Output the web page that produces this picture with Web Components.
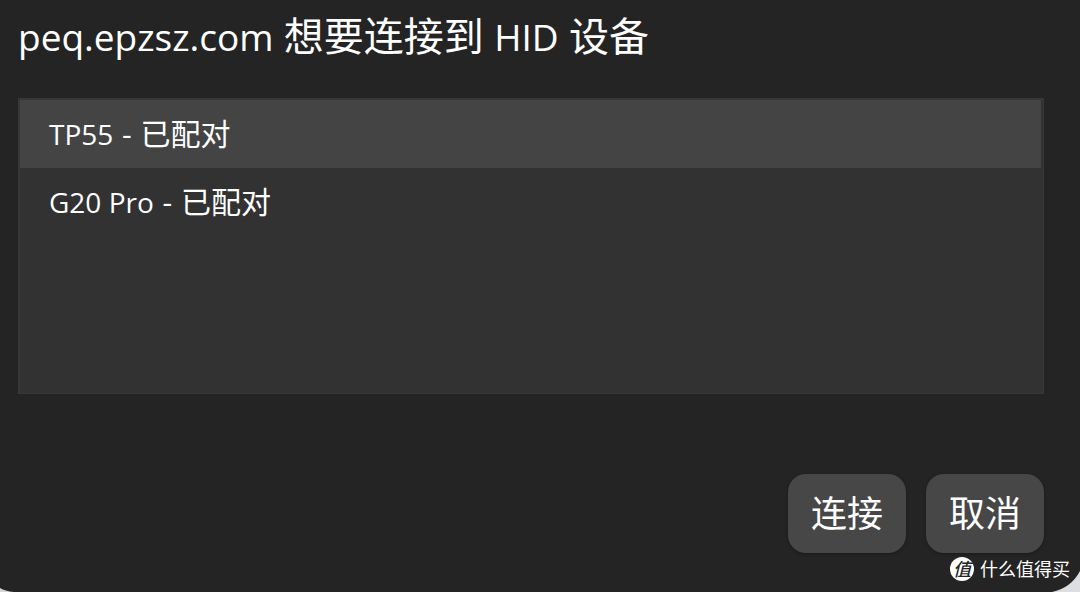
<!DOCTYPE html>
<html lang="zh-CN">
<head>
<meta charset="utf-8">
<meta name="viewport" content="width=device-width, initial-scale=1">
<title>HID 设备</title>
<style>
  html, body {
    margin: 0;
    min-height: 100%;
  }
  body {
    background: #242424;
    color: #fff;
    font-family: "Open Sans", "Noto Sans CJK SC", sans-serif;
  }
</style>
</head>
<body>
<device-chooser>
  <chooser-title slot="title" origin="peq.epzsz.com" device="HID"></chooser-title>
  <device-list slot="list">
    <device-item selected name="TP55"></device-item>
    <device-item name="G20 Pro"></device-item>
  </device-list>
  <chooser-button slot="actions">连接</chooser-button>
  <chooser-button slot="actions">取消</chooser-button>
  <site-mark slot="mark">什么值得买</site-mark>
</device-chooser>

<script>
class DeviceChooser extends HTMLElement {
  connectedCallback() {
    this.attachShadow({ mode: 'open' });
    this.shadowRoot.innerHTML = `
      <style>
        :host {
          display: block;
          position: relative;
          box-sizing: border-box;
          min-height: 100vh;
          padding: 8px 36px 36px 18px;
          background: #242424;
          overflow: hidden;
        }
        .actions {
          display: flex;
          justify-content: flex-end;
          gap: 20px;
          margin-top: 80px;
        }
        .mark {
          position: absolute;
          right: 10px;
          bottom: 10px;
          z-index: 1;
        }
        .corner {
          position: absolute;
          bottom: 0;
          display: block;
        }
        .left { left: 0; }
        .right { right: 0; }
      </style>
      <slot name="title"></slot>
      <slot name="list"></slot>
      <div class="actions"><slot name="actions"></slot></div>
      <svg class="corner left" width="16" height="5" viewBox="0 0 16 5"><path d="M0 1Q5 4 14 5H0Z" fill="#d6d6d6"/></svg>
      <svg class="corner right" width="28" height="21" viewBox="0 0 28 21"><path d="M28 0Q19 17 0 21H28Z" fill="#dddee2"/></svg>
      <div class="mark"><slot name="mark"></slot></div>
    `;
  }
}

class ChooserTitle extends HTMLElement {
  connectedCallback() {
    this.attachShadow({ mode: 'open' });
    this.shadowRoot.innerHTML = `
      <style>
        :host { display: block; }
        h1 {
          margin: 0 0 33px;
          font-size: 40px;
          font-weight: 400;
          line-height: 56px;
        }
        span { font-size: 37px; }
      </style>
      <h1><span>${this.getAttribute('origin')}</span> 想要连接到 <span>${this.getAttribute('device')}</span> 设备</h1>
    `;
  }
}

class DeviceList extends HTMLElement {
  connectedCallback() {
    this.attachShadow({ mode: 'open' });
    this.shadowRoot.innerHTML = `
      <style>
        :host { display: block; }
        div {
          box-sizing: border-box;
          min-height: 296px;
          padding-right: 2px;
          background: #323232;
          border: 2px solid #373737;
          border-width: 2px 1px 1px 2px;
        }
      </style>
      <div role="listbox" aria-label="HID 设备"><slot></slot></div>
    `;
  }
}

class DeviceItem extends HTMLElement {
  connectedCallback() {
    this.setAttribute('role', 'option');
    this.setAttribute('aria-selected', this.hasAttribute('selected'));
    this.tabIndex = 0;
    this.attachShadow({ mode: 'open' });
    this.shadowRoot.innerHTML = `
      <style>
        :host {
          display: block;
          padding: 0 29px;
          font-size: 30px;
          line-height: 68px;
          cursor: default;
          outline: none;
        }
        :host([selected]) { background: #444; }
        .name { font-size: 28px; }
        .dash { padding: 0 1px; }
      </style>
      <span class="name">${this.getAttribute('name')}</span><span class="dash"> - </span>已配对
    `;
  }
}

class ChooserButton extends HTMLElement {
  connectedCallback() {
    this.attachShadow({ mode: 'open' });
    this.shadowRoot.innerHTML = `
      <style>
        :host { display: block; }
        button {
          display: block;
          height: 79px;
          padding: 0 23px 5px;
          color: inherit;
          background: #474747;
          border: none;
          border-radius: 18px;
          box-shadow: 0 1px 3px #1a1a1a;
          font: inherit;
          font-size: 36px;
          cursor: pointer;
        }
      </style>
      <button type="button"><slot></slot></button>
    `;
  }
}

class SiteMark extends HTMLElement {
  connectedCallback() {
    this.attachShadow({ mode: 'open' });
    this.shadowRoot.innerHTML = `
      <style>
        :host {
          display: flex;
          align-items: center;
          gap: 6px;
          font-size: 18px;
          line-height: 26px;
        }
        .badge {
          width: 24px;
          height: 24px;
          border-radius: 50%;
          background: #fff;
          color: #242424;
          font-style: italic;
          font-weight: 500;
          line-height: 24px;
          text-align: center;
        }
      </style>
      <span class="badge">值</span>
      <span><slot></slot></span>
    `;
  }
}

customElements.define('device-chooser', DeviceChooser);
customElements.define('chooser-title', ChooserTitle);
customElements.define('device-list', DeviceList);
customElements.define('device-item', DeviceItem);
customElements.define('chooser-button', ChooserButton);
customElements.define('site-mark', SiteMark);
</script>
</body>
</html>
